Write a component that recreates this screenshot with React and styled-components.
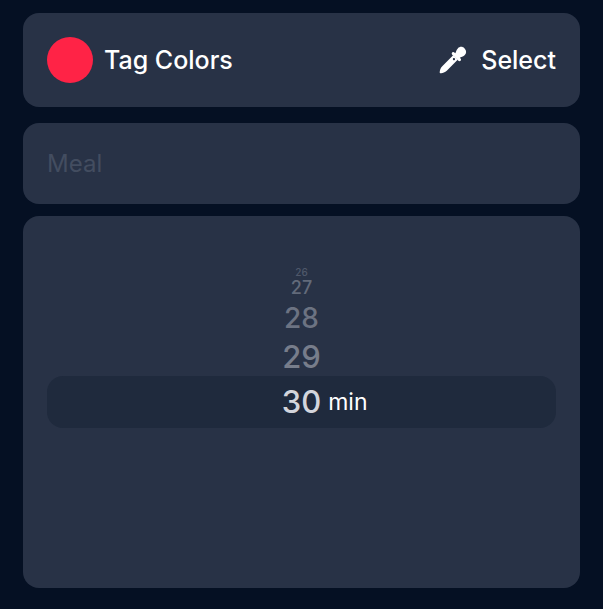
import React, { useState } from 'react'
import styled, { createGlobalStyle } from 'styled-components';

const GlobalStyle = createGlobalStyle`
  * {
    box-sizing: border-box;
  }
  body {
    margin: 0;
    background: #051023;
    color: white;
    font-family: Inter, "Liberation Sans", sans-serif;
  }
`;

const Form = styled.form`
  display: flex;
  flex-direction: column;
  padding: 13px 23px 21px;
`;

const Card = styled.div`
  background: #283246;
  border-radius: 16px;
  padding: ${props => props.$padding};
  margin-bottom: ${props => props.$gap || '0'};
`;

const ColorRow = styled(Card)`
  display: flex;
  align-items: center;
  justify-content: space-between;
`;

const TagLabel = styled.div`
  display: flex;
  align-items: center;
  gap: 11px;
  font-size: 25px;
  line-height: 46px;
  font-weight: 500;
`;

const Swatch = styled.span`
  width: 46px;
  height: 46px;
  border-radius: 50%;
  background: ${props => props.$color};
`;

const SelectButton = styled.button`
  display: flex;
  align-items: center;
  gap: 14px;
  padding: 0;
  border: none;
  background: none;
  color: white;
  font: inherit;
  font-size: 25px;
  line-height: 46px;
  font-weight: 500;
  cursor: pointer;
`;

const MealInput = styled.input`
  display: block;
  width: 100%;
  height: 33px;
  padding: 0;
  border: none;
  outline: none;
  background: none;
  color: white;
  font: inherit;
  font-size: 24px;
  &::placeholder{
    color: #434d60;
    opacity: 1;
  }
`;

const Wheel = styled.fieldset`
  display: flex;
  flex-direction: column;
  margin: 0;
  padding: 0;
  border: none;
`;

const WheelRow = styled.label`
  display: grid;
  grid-template-columns: 1fr auto 1fr;
  align-items: center;
  height: ${props => props.$height}px;
  border-radius: 16px;
  background: ${props => props.$active ? '#1f2a3d' : 'transparent'};
  color: ${props => props.$color};
  font-size: ${props => props.$size}px;
  line-height: ${props => props.$height}px;
  font-weight: 500;
  cursor: pointer;
`;

const Radio = styled.input`
  appearance: none;
  width: 0;
  height: 0;
  margin: 0;
`;

const Unit = styled.span`
  padding-left: 7px;
  color: white;
  font-size: 23px;
  font-weight: 400;
`;

// rows get shorter, smaller and dimmer towards the top of the wheel
const rows = [
  { value: 26, height: 12, size: 10, color: '#4f586a' },
  { value: 27, height: 20, size: 18, color: '#626a7a' },
  { value: 28, height: 40, size: 28, color: '#6c7382' },
  { value: 29, height: 38, size: 31, color: '#777d8b' },
  { value: 30, height: 52, size: 31, color: '#d3d5dc' },
];

const Eyedropper = () => (
  <svg width="28" height="28" viewBox="0 0 28 28" fill="white" aria-hidden="true">
    <g transform="rotate(45 14 14)">
      <path d="M14 -2.4 C17 -2.4 18.8 -.4 18.8 2.4 C18.8 4.8 17.4 6 17.2 7.6 H18 C19.2 7.6 19.9 8.2 19.9 9.2 C19.9 10.2 19.2 10.8 18 10.8 H10 C8.8 10.8 8.1 10.2 8.1 9.2 C8.1 8.2 8.8 7.6 10 7.6 H10.8 C10.6 6 9.2 4.8 9.2 2.4 C9.2 -.4 11 -2.4 14 -2.4 Z" />
      <path fillRule="evenodd" d="M10.8 10.6 H17.2 V26 C17.2 28.4 16.1 30.4 15 31.8 C14.4 32.6 13.6 32.6 13 31.8 C11.9 30.4 10.8 28.4 10.8 26 Z M14 11.6 a1.1 1.1 0 1 0 .1 0 Z" />
    </g>
  </svg>
)

const App = () => {
  const [meal, setMeal] = useState("");
  const [minutes, setMinutes] = useState(30);

  return (
    <>
      <GlobalStyle />
      <Form>
        <ColorRow $padding="24px" $gap="16px">
          <TagLabel>
            <Swatch $color="#ff2346" />
            Tag Colors
          </TagLabel>
          <SelectButton type="button">
            <Eyedropper />
            Select
          </SelectButton>
        </ColorRow>
        <Card $padding="24px" $gap="12px">
          <MealInput
            type="text"
            aria-label="Meal"
            placeholder="Meal"
            value={meal}
            onChange={e => setMeal(e.target.value)}
          />
        </Card>
        <Card $padding="50px 24px 160px">
          <Wheel aria-label="Minutes">
            {rows.map(row => (
              <WheelRow
                key={row.value}
                $height={row.height}
                $size={row.size}
                $color={row.color}
                $active={row.value === minutes}
              >
                <Radio
                  type="radio"
                  name="minutes"
                  value={row.value}
                  checked={row.value === minutes}
                  onChange={() => setMinutes(row.value)}
                />
                <span>{row.value}</span>
                {row.value === minutes ? <Unit>min</Unit> : <span />}
              </WheelRow>
            ))}
          </Wheel>
        </Card>
      </Form>
    </>
  )
}

export default App;
